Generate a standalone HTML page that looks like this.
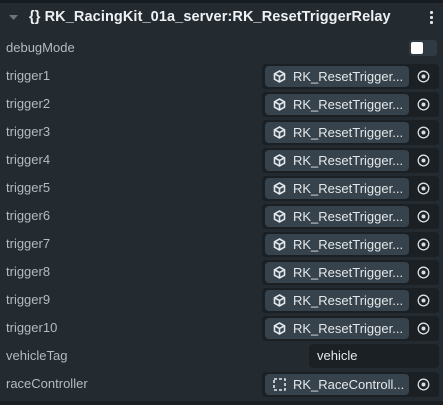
<!DOCTYPE html><html><head><style>
body{margin:0;width:443px;height:405px;background:#232a30;font-family:"Liberation Sans",sans-serif;overflow:hidden;position:relative;color:#c3c8cc}
.top{position:absolute;left:0;top:0;width:443px;height:3px;background:#171c20}
.lbl{position:absolute;left:6px;font-size:13px;color:#b4bac0}
.box{position:absolute;left:262px;width:177px;height:25px;background:#1a2024;border-radius:4px}
.pill{position:absolute;left:3px;top:2px;width:144px;height:21px;background:#36434d;border-radius:4px;color:#e4e8ea;font-size:13px;line-height:21px}
.pill span{position:absolute;left:28px}
.ic{position:absolute;left:8px;top:4px}
.tg{position:absolute;left:155px;top:6px}
</style></head><body>
<div class="top"></div>
<svg style="position:absolute;left:9px;top:15px" width="10" height="6"><path d="M0 0H9L4.5 5Z" fill="#6b757d"/></svg>
<div style="position:absolute;left:29px;top:9px;font-size:14.5px;font-weight:bold;color:#eef1f3;letter-spacing:0.1px">{}&nbsp;RK_RacingKit_01a_server:RK_ResetTriggerRelay</div>
<div style="position:absolute;left:430px;top:11px;width:3px;height:3px;background:#e0e4e6;box-shadow:0 5px 0 #e0e4e6,0 10px 0 #e0e4e6;border-radius:1px"></div>
<div class="lbl" style="top:40px">debugMode</div>
<div style="position:absolute;left:409px;top:40px;width:28px;height:16px;background:#2f3a42;border-radius:3px"><div style="position:absolute;left:2px;top:2px;width:12px;height:12px;background:#fff;border-radius:2px"></div></div>
<div id="rows"></div>
<script>
var h='';for(var i=1;i<=10;i++){var y=64+(i-1)*28;h+='<div class="lbl" style="top:'+(y+4)+'px">trigger'+i+'</div><div class="box" style="top:'+y+'px"><div class="pill"><svg class="ic" width="13" height="13" viewBox="0 0 13 13"><path d="M6.5 1L11.5 3.8V9.2L6.5 12L1.5 9.2V3.8Z M1.5 3.8L6.5 6.5L11.5 3.8 M6.5 6.5V12" fill="none" stroke="#e4e8ea" stroke-width="1.6"/></svg><span>RK_ResetTrigger...</span></div><svg class="tg" width="13" height="13"><circle cx="6.5" cy="6.5" r="5.3" fill="none" stroke="#d8dcdf" stroke-width="1.3"/><circle cx="6.5" cy="6.5" r="2" fill="#d8dcdf"/></svg></div>';}
h+='<div class="lbl" style="top:348px">vehicleTag</div><div style="position:absolute;left:309px;top:344px;width:130px;height:24px;background:#1a2024;border-radius:4px;font-size:13px;color:#e4e8ea;line-height:24px;padding-left:8px;box-sizing:border-box">vehicle</div>';
h+='<div class="lbl" style="top:376px">raceController</div><div class="box" style="top:372px"><div class="pill"><svg class="ic" width="13" height="13"><rect x="1" y="1" width="11" height="11" fill="none" stroke="#e4e8ea" stroke-width="1.6" stroke-dasharray="3 2"/></svg><span>RK_RaceControll...</span></div><svg class="tg" width="13" height="13"><circle cx="6.5" cy="6.5" r="5.3" fill="none" stroke="#d8dcdf" stroke-width="1.3"/><circle cx="6.5" cy="6.5" r="2" fill="#d8dcdf"/></svg></div>';
document.getElementById('rows').innerHTML=h;
</script>
<div style="position:absolute;left:0;top:401px;width:443px;height:4px;background:#1a1f23"></div>
</body></html>
